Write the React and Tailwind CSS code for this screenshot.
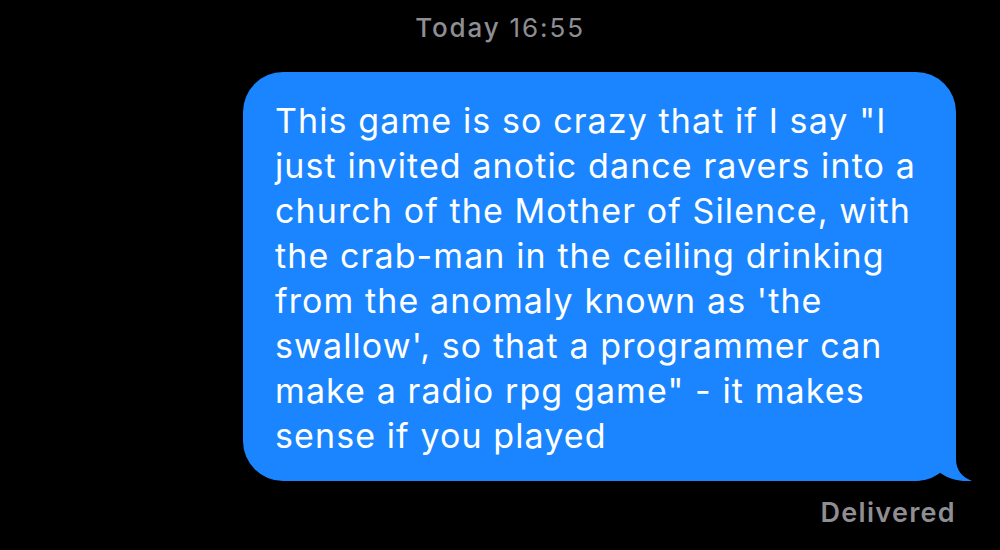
export default function App() {
  const lines = [
    'This game is so crazy that if I say "I',
    "just invited anotic dance ravers into a",
    "church of the Mother of Silence, with",
    "the crab-man in the ceiling drinking",
    "from the anomaly known as 'the",
    "swallow', so that a programmer can",
    'make a radio rpg game" - it makes',
    "sense if you played",
  ];

  return (
    <div className="h-[550px] w-[1000px] overflow-hidden bg-black font-['Inter',sans-serif]">
      <div className="pt-[11px] text-center text-[26px] font-medium leading-[34px] tracking-[1.9px] text-[#8e8e93]">
        Today <span className="font-normal">16:55</span>
      </div>

      <div className="mt-[27px] flex justify-end pr-[44px]">
        <div className="relative w-[713px] rounded-[40px] bg-[#1a85ff] pt-[26px] pb-[23px] pl-[32px] pr-[10px] text-[34px] leading-[45px] tracking-[1.1px] text-white">
          {lines.map((line) => (
            <div key={line} className="whitespace-nowrap">
              {line}
            </div>
          ))}
          <svg
            className="absolute bottom-0 right-[-16px]"
            width="72"
            height="52"
            viewBox="0 0 72 52"
          >
            <path
              d="M0 0 L56 0 L56 30 C56 41 62 48 72 52 C60 53 48 50 39 43 C32 49 22 52 12 52 L0 52 Z"
              fill="#1a85ff"
            />
          </svg>
        </div>
      </div>

      <div className="mt-[15px] pr-[44px] text-right text-[27px] font-semibold leading-[34px] tracking-[1.3px] text-[#8e8e93]">
        Delivered
      </div>
    </div>
  );
}
